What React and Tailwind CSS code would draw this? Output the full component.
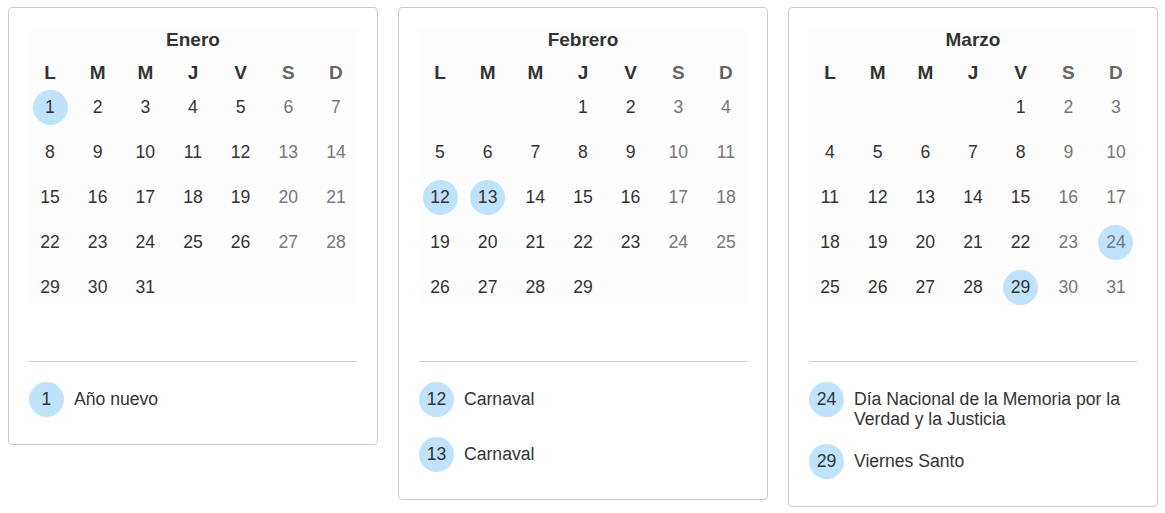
import React from 'react';

const DAY_HEADERS = ['L', 'M', 'M', 'J', 'V', 'S', 'D'];

const MONTHS = [
  { name: 'Enero', offset: 0, days: 31, holidays: [{ day: 1, label: 'Año nuevo' }] },
  {
    name: 'Febrero',
    offset: 3,
    days: 29,
    holidays: [
      { day: 12, label: 'Carnaval' },
      { day: 13, label: 'Carnaval' },
    ],
  },
  {
    name: 'Marzo',
    offset: 4,
    days: 31,
    holidays: [
      { day: 24, label: 'Día Nacional de la Memoria por la Verdad y la Justicia' },
      { day: 29, label: 'Viernes Santo' },
    ],
  },
];

const buildWeeks = (offset, days) => {
  const cells = [];
  for (let i = 0; i < offset; i++) cells.push(null);
  for (let d = 1; d <= days; d++) cells.push(d);
  while (cells.length % 7) cells.push(null);
  const weeks = [];
  for (let i = 0; i < cells.length; i += 7) weeks.push(cells.slice(i, i + 7));
  return weeks;
};

const MonthCard = ({ month }) => {
  const weeks = buildWeeks(month.offset, month.days);
  const holidayDays = month.holidays.map((h) => h.day);

  return (
    <div className="w-[370px] shrink-0 bg-white border border-[#cccccc] rounded-[4px] px-5 pt-[21px] pb-5">
      <div className="bg-[#fdfdfd]">
        <h2 className="text-center text-[19px] font-bold leading-[22px] text-[#333]">{month.name}</h2>

        <div className="mt-[11px] flex justify-between h-[23px]">
          {DAY_HEADERS.map((h, i) => (
            <div
              key={i}
              className={`w-[42px] flex items-center justify-center text-[19px] font-bold ${
                i >= 5 ? 'text-[#666]' : 'text-[#333]'
              }`}
            >
              {h}
            </div>
          ))}
        </div>

        <div className="mt-[5px] flex flex-col gap-[10px]">
          {weeks.map((week, wi) => (
            <div key={wi} className="flex justify-between">
              {week.map((d, i) => (
                <div key={i} className="w-[42px] h-[35px] flex items-center justify-center">
                  {d && (
                    <span
                      className={`w-[35px] h-[35px] rounded-full flex items-center justify-center text-[17.6px] ${
                        holidayDays.includes(d) ? 'bg-[#bfe3fc]' : ''
                      } ${i >= 5 ? 'text-[#777]' : 'text-[#333]'}`}
                    >
                      {d}
                    </span>
                  )}
                </div>
              ))}
            </div>
          ))}
        </div>
      </div>

      <div className="mt-[56px] border-t border-[#cccccc]" />

      <ul className="mt-5 mb-[7px] flex flex-col gap-5">
        {month.holidays.map((h) => (
          <li key={h.day} className="flex items-start gap-[10px]">
            <span className="w-[35px] h-[35px] shrink-0 rounded-full bg-[#bfe3fc] flex items-center justify-center text-[17.6px] text-[#333]">
              {h.day}
            </span>
            <span className="pt-[7px] -mb-[5px] text-[17.6px] leading-[20px] text-[#333]">{h.label}</span>
          </li>
        ))}
      </ul>
    </div>
  );
};

export default function App() {
  return (
    <div
      className="min-h-screen bg-white flex items-start gap-5 pl-2 pt-[7px]"
      style={{ fontFamily: '"Liberation Sans", Arial, sans-serif' }}
    >
      {MONTHS.map((m) => (
        <MonthCard key={m.name} month={m} />
      ))}
    </div>
  );
}
